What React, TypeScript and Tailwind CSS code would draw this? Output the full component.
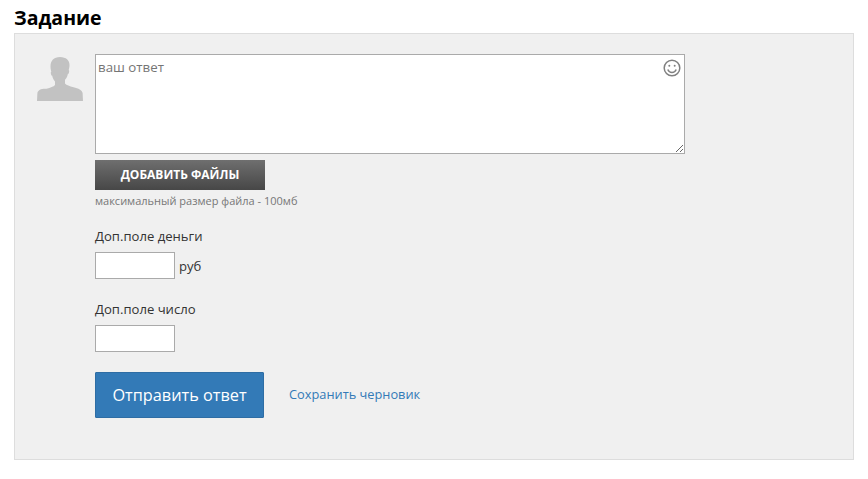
export default function App() {
  return (
    <div className="h-[479px] w-[868px] overflow-hidden bg-white px-[14px] font-['Open_Sans',sans-serif] text-[#333]">
      <h2 className="h-[33px] pt-[5px] text-[19.500px] leading-[26px] font-bold text-black">Задание</h2>

      <div className="flex h-[427px] w-[840px] border border-[#dddddd] bg-[#f0f0f0] pt-5 pl-[22px]">
        {/* Avatar */}
        <div className="mr-3 w-[46px] shrink-0 pt-[3px]">
          <svg width="46" height="44" viewBox="0 0 46 44" fill="#c2c2c2">
            <path d="M23 0c-6.200 0-9.500 3.600-9.500 9.500 0 2 .4 3.700.8 5-.6.300-.6 1.500-.3 2.700.3 1 .8 1.500 1.200 1.600.5 2.500 1.500 4.400 2.800 5.600v3.600c-1.500 1.700-4.500 2.700-8.500 3.800C4.500 31.500 1 33 .4 36L0 44h46l-.4-8c-.6-3-4.100-4.500-9.100-5.800-4-1.100-7-2.100-8.500-3.800v-3.600c1.300-1.200 2.300-3.100 2.800-5.600.4-.1.900-.6 1.200-1.600.3-1.200.3-2.400-.3-2.700.4-1.300.8-3 .8-5C32.500 3.600 29.200 0 23 0z" />
          </svg>
        </div>

        <div className="w-[590px]">
          {/* Answer box */}
          <div className="relative h-[100px]">
            <textarea
              placeholder="ваш ответ"
              className="block h-[100px] w-[590px] resize border border-[#aaaaaa] bg-white px-[2px] py-[3px] text-[13.300px] leading-[19px] outline-none placeholder:text-[#757575]"
            />
            <svg
              className="absolute top-[5px] right-[4px]"
              width="18"
              height="18"
              viewBox="0 0 18 18"
              fill="none"
              stroke="#808080"
              strokeWidth="1.500"
            >
              <circle cx="9" cy="9" r="7.800" />
              <circle cx="6.300" cy="6.800" r="1" fill="#808080" stroke="none" />
              <circle cx="11.700" cy="6.800" r="1" fill="#808080" stroke="none" />
              <path d="M4.800 10.500c.8 2 2.300 3 4.200 3s3.400-1 4.200-3" />
            </svg>
          </div>

          <button className="mt-[6px] block h-[30px] w-[170px] bg-gradient-to-b from-[#6f6f6f] to-[#474747] text-[12px] font-bold text-white">
            ДОБАВИТЬ ФАЙЛЫ
          </button>
          <p className="mt-[3px] text-[11px] leading-[16px] text-[#777]">максимальный размер файла - 100мб</p>

          <label className="mt-[17px] block text-[13.100px] leading-[20px]">Доп.поле деньги</label>
          <div className="mt-[6px] flex items-center gap-1">
            <input className="h-[27px] w-[80px] border border-[#aaaaaa] bg-white outline-none" />
            <span className="text-[13.100px] leading-[20px]">руб</span>
          </div>

          <label className="mt-5 block text-[13.100px] leading-[20px]">Доп.поле число</label>
          <input className="mt-[6px] block h-[27px] w-[80px] border border-[#aaaaaa] bg-white outline-none" />

          <div className="mt-5 flex items-center">
            <button className="h-[46px] w-[169px] rounded-[1px] border border-[#2e6da4] bg-[#337ab7] text-[16.300px] text-white">
              Отправить ответ
            </button>
            <a className="ml-[25px] text-[12.800px] text-[#337ab7]">Сохранить черновик</a>
          </div>
        </div>
      </div>
    </div>
  );
}
